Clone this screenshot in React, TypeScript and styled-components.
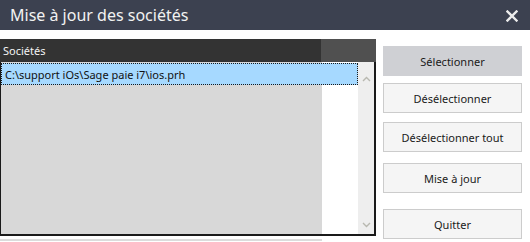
import styled, { createGlobalStyle } from "styled-components";

const GlobalStyle = createGlobalStyle`
    html, body {
        margin: 0;
        padding: 0;
        background: #ffffff;
    }
    body {
        font-family: "Noto Sans", "Open Sans", "Liberation Sans", sans-serif;
    }
`;

const files = ["C:\\support iOs\\Sage paie i7\\ios.prh"];

const buttons = [
    { label: "Sélectionner", top: 0, primary: true },
    { label: "Désélectionner", top: 7 },
    { label: "Désélectionner tout", top: 9 },
    { label: "Mise à jour", top: 11 },
    { label: "Quitter", top: 16 },
];

export default function App() {
    return (
        <Window>
            <GlobalStyle />
            <TitleBar>
                <Title>Mise à jour des sociétés</Title>
                <CloseButton aria-label="Fermer">
                    <svg width="12" height="12" viewBox="0 0 12 12">
                        <path d="M1.5 1.5 L10.5 10.5 M10.5 1.5 L1.5 10.5" stroke="#ececec" strokeWidth="2.4" strokeLinecap="square" />
                    </svg>
                </CloseButton>
            </TitleBar>

            <Body>
                <ListPanel>
                    <ListHeader>
                        <HeaderCell>Sociétés</HeaderCell>
                        <HeaderFiller />
                    </ListHeader>
                    <ListBody>
                        <Rows>
                            {files.map((f, i) => (
                                <Row key={f} selected={i === 0}>
                                    {f}
                                </Row>
                            ))}
                        </Rows>
                        <ScrollBar>
                            <Chevron viewBox="0 0 9 6">
                                <path d="M1 5 L4.5 1.5 L8 5" fill="none" stroke="#b8b8b0" strokeWidth="1.4" />
                            </Chevron>
                            <Chevron viewBox="0 0 9 6">
                                <path d="M1 1 L4.5 4.5 L8 1" fill="none" stroke="#b8b8b0" strokeWidth="1.4" />
                            </Chevron>
                        </ScrollBar>
                    </ListBody>
                    <NextStrip />
                </ListPanel>

                <ButtonColumn>
                    {buttons.map(b => (
                        <ActionButton key={b.label} primary={b.primary} offset={b.top}>
                            {b.label}
                        </ActionButton>
                    ))}
                </ButtonColumn>
            </Body>
        </Window>
    );
}

const Window = styled.div`
    width: 530px;
    height: 242px;
    overflow: hidden;
    background: #ffffff;
    display: flex;
    flex-direction: column;
`;

const TitleBar = styled.div`
    height: 30px;
    flex: none;
    background: #3c4150;
    display: flex;
    align-items: center;
    justify-content: space-between;
    padding: 0 12px 0 10px;
`;

const Title = styled.div`
    color: #f2f2f2;
    font-size: 16px;
    line-height: 30px;
`;

const CloseButton = styled.div`
    width: 12px;
    height: 12px;
    display: flex;
    margin-top: 1px;
`;

const Body = styled.div`
    flex: 1;
    display: flex;
    padding-top: 9px;
`;

const ListPanel = styled.div`
    width: 376px;
    display: flex;
    flex-direction: column;
`;

const ListHeader = styled.div`
    height: 23px;
    display: flex;
`;

const HeaderCell = styled.div`
    width: 321px;
    background: #333333;
    color: #f4f4f4;
    font-size: 11px;
    line-height: 23px;
    padding-left: 3px;
    box-sizing: border-box;
`;

const HeaderFiller = styled.div`
    flex: 1;
    background: #505050;
`;

const ListBody = styled.div`
    height: 174px;
    display: flex;
    border-left: 1px solid #1a1a1a;
    border-right: 2px solid #1a1a1a;
    border-bottom: 2px solid #1a1a1a;
    box-sizing: border-box;
`;

const Rows = styled.div`
    flex: 1;
    padding-top: 1px;
    background: linear-gradient(to right, #d8d8d8 321px, #ffffff 321px);
`;

const Row = styled.div<{ selected?: boolean }>`
    height: 22px;
    line-height: 21px;
    padding-left: 3px;
    font-size: 11px;
    color: #111111;
    box-sizing: border-box;
    background: ${p => (p.selected ? "#a6d9ff" : "transparent")};
    border: 1px dotted ${p => (p.selected ? "#1a1a1a" : "transparent")};
`;

const ScrollBar = styled.div`
    width: 16px;
    background: #eeeeee;
    display: flex;
    flex-direction: column;
    justify-content: space-between;
    align-items: center;
    padding: 14px 0 6px;
`;

const Chevron = styled.svg`
    width: 9px;
    height: 6px;
`;

const NextStrip = styled.div`
    margin-top: 3px;
    height: 2px;
    width: 322px;
    background: #dcdcdc;
`;

const ButtonColumn = styled.div`
    display: flex;
    flex-direction: column;
    padding: 7px 0 0 7px;
`;

const ActionButton = styled.div<{ primary?: boolean; offset: number }>`
    width: 139px;
    height: 30px;
    box-sizing: border-box;
    margin-top: ${p => p.offset}px;
    display: flex;
    align-items: center;
    justify-content: center;
    font-size: 11px;
    color: #1a1a1a;
    background: ${p => (p.primary ? "#cfd0d4" : "#f5f5f5")};
    border: 1px solid ${p => (p.primary ? "#cfd0d4" : "#cccccc")};
`;
